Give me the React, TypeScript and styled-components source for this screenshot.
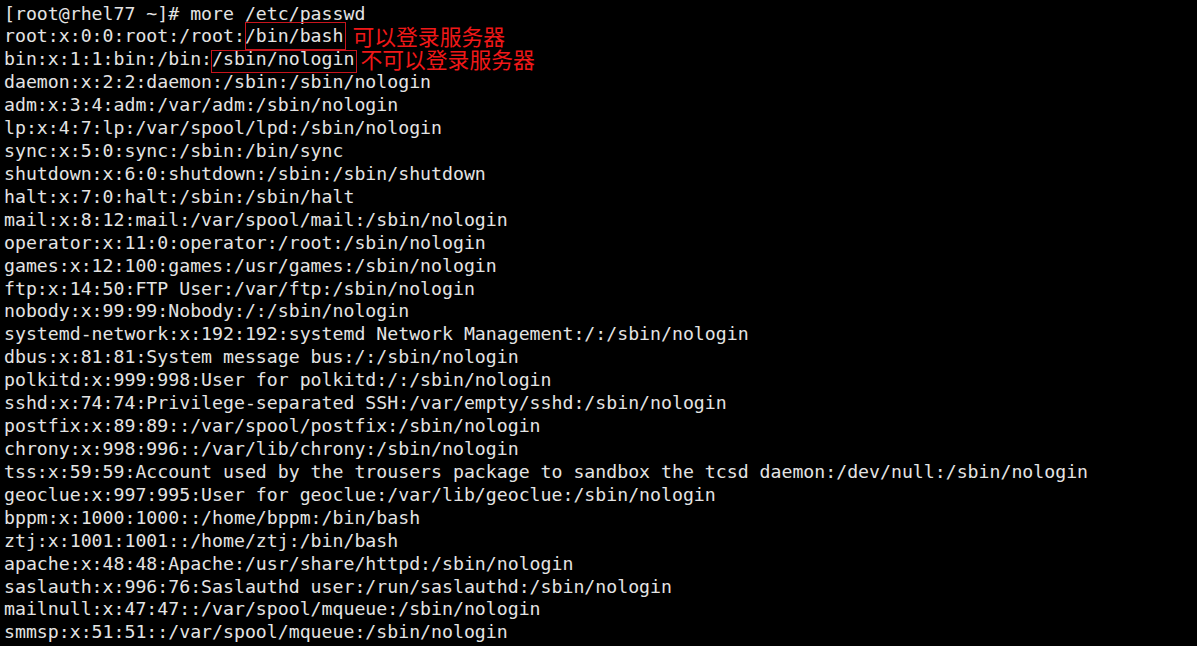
import React from "react";
import styled, { createGlobalStyle } from "styled-components";

const Global = createGlobalStyle`
  html, body {
    margin: 0;
    padding: 0;
    background: #000;
  }
  body {
    width: 1197px;
    height: 646px;
    overflow: hidden;
  }
`;

const Terminal = styled.div`
  width: 1197px;
  height: 646px;
  box-sizing: border-box;
  padding: 2.5px 0 0 4px;
  background: #000;
  color: #e4e4e4;
  font-family: "DejaVu Sans Mono", "Liberation Mono", monospace;
  font-size: 18.2px;
`;

const Line = styled.div`
  height: 22.93px;
  line-height: 22.93px;
  white-space: pre;
`;

const Boxed = styled.span<{ $top: number; $bottom: number; $left: number; $right: number }>`
  position: relative;
  display: inline-block;
  vertical-align: top;
  height: 22.93px;
  &::after {
    content: "";
    position: absolute;
    top: ${(p) => p.$top}px;
    bottom: ${(p) => p.$bottom}px;
    left: ${(p) => p.$left}px;
    right: ${(p) => p.$right}px;
    border: 1.3px solid #c8141c;
    pointer-events: none;
  }
`;

const Note = styled.span<{ $gap: number }>`
  display: inline-block;
  margin-left: ${(p) => p.$gap}px;
  font-family: "Noto Sans CJK SC", "Noto Sans", sans-serif;
  font-size: 21.8px;
  line-height: 22.93px;
  vertical-align: top;
  color: #f01818;
`;

const lines = [
  "daemon:x:2:2:daemon:/sbin:/sbin/nologin",
  "adm:x:3:4:adm:/var/adm:/sbin/nologin",
  "lp:x:4:7:lp:/var/spool/lpd:/sbin/nologin",
  "sync:x:5:0:sync:/sbin:/bin/sync",
  "shutdown:x:6:0:shutdown:/sbin:/sbin/shutdown",
  "halt:x:7:0:halt:/sbin:/sbin/halt",
  "mail:x:8:12:mail:/var/spool/mail:/sbin/nologin",
  "operator:x:11:0:operator:/root:/sbin/nologin",
  "games:x:12:100:games:/usr/games:/sbin/nologin",
  "ftp:x:14:50:FTP User:/var/ftp:/sbin/nologin",
  "nobody:x:99:99:Nobody:/:/sbin/nologin",
  "systemd-network:x:192:192:systemd Network Management:/:/sbin/nologin",
  "dbus:x:81:81:System message bus:/:/sbin/nologin",
  "polkitd:x:999:998:User for polkitd:/:/sbin/nologin",
  "sshd:x:74:74:Privilege-separated SSH:/var/empty/sshd:/sbin/nologin",
  "postfix:x:89:89::/var/spool/postfix:/sbin/nologin",
  "chrony:x:998:996::/var/lib/chrony:/sbin/nologin",
  "tss:x:59:59:Account used by the trousers package to sandbox the tcsd daemon:/dev/null:/sbin/nologin",
  "geoclue:x:997:995:User for geoclue:/var/lib/geoclue:/sbin/nologin",
  "bppm:x:1000:1000::/home/bppm:/bin/bash",
  "ztj:x:1001:1001::/home/ztj:/bin/bash",
  "apache:x:48:48:Apache:/usr/share/httpd:/sbin/nologin",
  "saslauth:x:996:76:Saslauthd user:/run/saslauthd:/sbin/nologin",
  "mailnull:x:47:47::/var/spool/mqueue:/sbin/nologin",
  "smmsp:x:51:51::/var/spool/mqueue:/sbin/nologin",
];

export default function App() {
  return (
    <>
      <Global />
      <Terminal>
        <Line>[root@rhel77 ~]# more /etc/passwd</Line>
        <Line>
          root:x:0:0:root:/root:
          <Boxed $top={-3} $bottom={-1.5} $left={0} $right={-3}>/bin/bash</Boxed>
          <Note $gap={9}>可以登录服务器</Note>
        </Line>
        <Line>
          bin:x:1:1:bin:/bin:
          <Boxed $top={1.5} $bottom={-2} $left={-1} $right={-2.5}>/sbin/nologin</Boxed>
          <Note $gap={6}>不可以登录服务器</Note>
        </Line>
        {lines.map((l, i) => (
          <Line key={i}>{l}</Line>
        ))}
      </Terminal>
    </>
  );
}
